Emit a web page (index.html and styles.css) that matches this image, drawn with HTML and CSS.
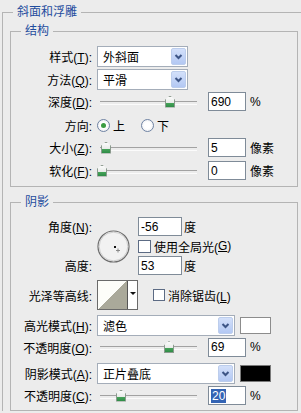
FILE: index.html
```html
<!DOCTYPE html>
<html lang="zh-CN">
<head>
  <meta charset="UTF-8">
  <meta name="viewport" content="width=device-width, initial-scale=1.0">
  <title>斜面和浮雕</title>
  <link rel="stylesheet" href="styles.css">
</head>
<body>
  <fieldset class="group outer">
    <legend>斜面和浮雕</legend>

    <fieldset class="group inner structure">
      <legend>结构</legend>
      <div class="row r-style">
        <label class="lbl">样式(<u>T</u>):</label>
        <div class="select w-short"><span>外斜面</span><i class="arrow"><svg width="13" height="15" viewBox="0 0 13 15"><path d="M3.5 6 L6.5 9 L9.5 6" fill="none" stroke="#3d5586" stroke-width="2"/></svg></i></div>
      </div>
      <div class="row r-method">
        <label class="lbl">方法(<u>Q</u>):</label>
        <div class="select w-short"><span>平滑</span><i class="arrow"><svg width="13" height="15" viewBox="0 0 13 15"><path d="M3.5 6 L6.5 9 L9.5 6" fill="none" stroke="#3d5586" stroke-width="2"/></svg></i></div>
      </div>
      <div class="row r-depth">
        <label class="lbl">深度(<u>D</u>):</label>
        <div class="slider"><i class="thumb" style="left:68px"></i></div>
        <span class="num">690</span><span class="unit">%</span>
      </div>
      <div class="row r-dir">
        <label class="lbl">方向:</label>
        <span class="radio on"></span><span class="opt">上</span>
        <span class="radio second"></span><span class="opt">下</span>
      </div>
      <div class="row r-size">
        <label class="lbl">大小(<u>Z</u>):</label>
        <div class="slider"><i class="thumb" style="left:4px"></i></div>
        <span class="num">5</span><span class="unit">像素</span>
      </div>
      <div class="row r-soft">
        <label class="lbl">软化(<u>F</u>):</label>
        <div class="slider"><i class="thumb" style="left:0px"></i></div>
        <span class="num">0</span><span class="unit">像素</span>
      </div>
    </fieldset>

    <fieldset class="group inner shading">
      <legend>阴影</legend>
      <div class="angle">
        <label class="lbl a-lbl">角度(<u>N</u>):</label>
        <div class="dial">
          <svg width="33" height="33" viewBox="0 0 33 33">
            <circle cx="16.5" cy="16.5" r="15.5" fill="#f2f2f2" stroke="#6c6c6c" stroke-width="1.2"/>
            <circle cx="16.5" cy="16.5" r="14.3" fill="none" stroke="#cfcfcf" stroke-width="1"/>
            <rect x="17" y="16" width="2" height="2" fill="#111"/>
            <path d="M21 18.5 V22.5 M19 20.5 H23" stroke="#8a8a8a" stroke-width="1"/>
          </svg>
        </div>
        <div class="a-ctl"><span class="num w-angle">-56</span><span class="unit deg">度</span></div>
        <div class="a-chk"><span class="chk"></span>使用全局光(<u>G</u>)</div>
        <label class="lbl h-lbl">高度:</label>
        <div class="h-ctl"><span class="num w-angle">53</span><span class="unit deg">度</span></div>
      </div>
      <div class="row r-contour">
        <label class="lbl">光泽等高线:</label>
        <div class="contour"><span class="curve"></span><span class="drop"></span></div>
        <span class="chk aa"></span><span>消除锯齿(<u>L</u>)</span>
      </div>
      <div class="row r-hmode">
        <label class="lbl">高光模式(<u>H</u>):</label>
        <div class="select w-long"><span>滤色</span><i class="arrow"><svg width="13" height="15" viewBox="0 0 13 15"><path d="M3.5 6 L6.5 9 L9.5 6" fill="none" stroke="#3d5586" stroke-width="2"/></svg></i></div>
        <span class="swatch white"></span>
      </div>
      <div class="row r-hop">
        <label class="lbl">不透明度(<u>O</u>):</label>
        <div class="slider"><i class="thumb" style="left:67px"></i></div>
        <span class="num">69</span><span class="unit">%</span>
      </div>
      <div class="row r-smode">
        <label class="lbl">阴影模式(<u>A</u>):</label>
        <div class="select w-long"><span>正片叠底</span><i class="arrow"><svg width="13" height="15" viewBox="0 0 13 15"><path d="M3.5 6 L6.5 9 L9.5 6" fill="none" stroke="#3d5586" stroke-width="2"/></svg></i></div>
        <span class="swatch black"></span>
      </div>
      <div class="row r-sop">
        <label class="lbl">不透明度(<u>C</u>):</label>
        <div class="slider"><i class="thumb" style="left:19px"></i></div>
        <span class="num"><span class="sel">20</span></span><span class="unit">%</span>
      </div>
    </fieldset>
  </fieldset>
</body>
</html>
```

FILE: styles.css
```css
* {
  box-sizing: border-box;
}
body {
  margin: 0;
  padding: 4px 0 0 0;
  width: 301px;
  height: 413px;
  overflow: hidden;
  background-color: #ececec;
  font-family: "Liberation Sans", "Noto Sans CJK SC", sans-serif;
  font-size: 12px;
  color: #000;
}
u {
  text-decoration: underline;
  text-underline-offset: 1px;
}
.group {
  margin: 0;
  padding: 0;
  min-width: 0;
  border: 1px solid #b4b4b4;
}
.group legend {
  padding: 0 4px;
  line-height: 16px;
  font-size: 12px;
  color: #1f4d9e;
}
/* the outer box runs on past the right and bottom edges of the dialog */
.outer {
  margin-left: 2px;
  width: 299px;
  padding: 3px 0 0 7px;
  border-right: none;
  border-bottom: none;
}
.outer > legend {
  margin-left: 3px;
}
.inner {
  width: 288px;
}
.inner > legend {
  margin-left: 10px;
}
.structure {
  padding: 6px 0 6px 0;
}
.shading {
  margin-top: 7px;
  padding: 7px 0 5px 0;
}

/* rows */
.row {
  display: flex;
  align-items: center;
}
.lbl {
  flex: none;
  width: 81px;
  margin-right: 5px;
  text-align: right;
  white-space: nowrap;
}
.r-style { height: 22px; }
.r-method { height: 22px; margin-top: 1px; }
.r-depth { height: 21px; margin-top: 1px; }
.r-dir { height: 26px; }
.r-size { height: 19px; }
.r-soft { height: 19px; margin-top: 4px; }
.r-contour { height: 30px; margin-top: 5px; }
.r-hmode { height: 22px; margin-top: 4px; }
.r-hop { height: 20px; margin-top: 1px; }
.r-smode { height: 22px; margin-top: 5px; }
.r-sop { height: 19px; margin-top: 2px; }

/* dropdown */
.select {
  display: flex;
  align-items: center;
  height: 21px;
  padding-left: 5px;
  background-color: #fff;
  border: 1px solid #a4adb9;
}
.w-short { width: 91px; }
.w-long { width: 138px; }
.select .arrow {
  display: flex;
  align-items: center;
  justify-content: center;
  margin-left: auto;
  margin-right: 1px;
  width: 15px;
  height: 17px;
  background: linear-gradient(#d3e0fa, #b3c8f3);
  border: 1px solid #bccdec;
  border-radius: 2px;
}

/* slider */
.slider {
  position: relative;
  flex: none;
  width: 104px;
  height: 14px;
  margin-right: 7px;
}
.slider::before {
  content: "";
  position: absolute;
  left: 3px;
  right: 4px;
  top: 6px;
  height: 2px;
  border-top: 1px solid #a2a2a2;
  border-bottom: 1px solid #fbfbfb;
}
.thumb {
  position: absolute;
  top: 1px;
  width: 10px;
  height: 12px;
  background: linear-gradient(#fbfbfb 0, #e9ece9 55%, #47a45a 60%, #2f8c47 100%);
  border: 1px solid #8b9a8e;
  clip-path: polygon(50% 0, 100% 35%, 100% 100%, 0 100%, 0 35%);
}

/* number box */
.num {
  display: flex;
  align-items: center;
  width: 38px;
  height: 19px;
  padding-left: 2px;
  background-color: #fff;
  border: 1px solid #7f8b98;
}
.w-angle {
  width: 44px;
}
.sel {
  background-color: #3464b4;
  color: #fff;
  padding: 0 1px;
}
.unit {
  margin-left: 4px;
}
.unit.deg {
  margin-left: 2px;
}

/* radio + checkbox */
.radio {
  flex: none;
  position: relative;
  width: 13px;
  height: 13px;
  border-radius: 50%;
  border: 1px solid #6f83a3;
  background: radial-gradient(circle, #ffffff 40%, #e4e6ea 100%);
}
.radio.on::after {
  content: "";
  position: absolute;
  left: 3px;
  top: 3px;
  width: 5px;
  height: 5px;
  border-radius: 50%;
  background-color: #3b9c41;
}
.radio.second {
  margin-left: 16px;
}
.opt {
  margin-left: 3px;
}
.chk {
  flex: none;
  display: inline-block;
  width: 13px;
  height: 13px;
  margin-right: 3px;
  background-color: #fff;
  border: 1px solid #5c6b84;
}
.chk.aa {
  width: 12px;
  height: 12px;
  margin-left: 15px;
}

/* angle block */
.angle {
  display: grid;
  grid-template-columns: 81px 36px auto;
  grid-template-rows: 19px 20px 19px;
  column-gap: 5px;
  align-items: center;
}
.angle .lbl {
  width: auto;
  margin-right: 0;
}
.a-lbl { grid-column: 1; grid-row: 1; }
.h-lbl { grid-column: 1; grid-row: 3; }
.dial {
  grid-column: 2;
  grid-row: 1 / 4;
  display: flex;
}
.a-ctl,
.h-ctl,
.a-chk {
  grid-column: 3;
  display: flex;
  align-items: center;
}
.a-ctl { grid-row: 1; }
.a-chk { grid-row: 2; }
.h-ctl { grid-row: 3; }

/* contour picker */
.contour {
  display: flex;
  width: 41px;
  height: 30px;
  background-color: #fff;
  border: 1px solid #6a6a6a;
}
.contour .curve {
  width: 30px;
  height: 100%;
  background: linear-gradient(to bottom right, #fdfdf9 50%, #aaa99a 50%);
  border-right: 1px solid #555;
}
.contour .drop {
  flex: 1;
  position: relative;
}
.contour .drop::after {
  content: "";
  position: absolute;
  left: 2px;
  top: 11px;
  border-left: 3px solid transparent;
  border-right: 3px solid transparent;
  border-top: 3px solid #111;
}

/* colour swatch */
.swatch {
  width: 31px;
  height: 17px;
  margin-left: 5px;
  border: 1px solid #8c8c8c;
}
.swatch.white { background-color: #fff; }
.swatch.black { background-color: #000; border-color: #7a7a7a; }
```
